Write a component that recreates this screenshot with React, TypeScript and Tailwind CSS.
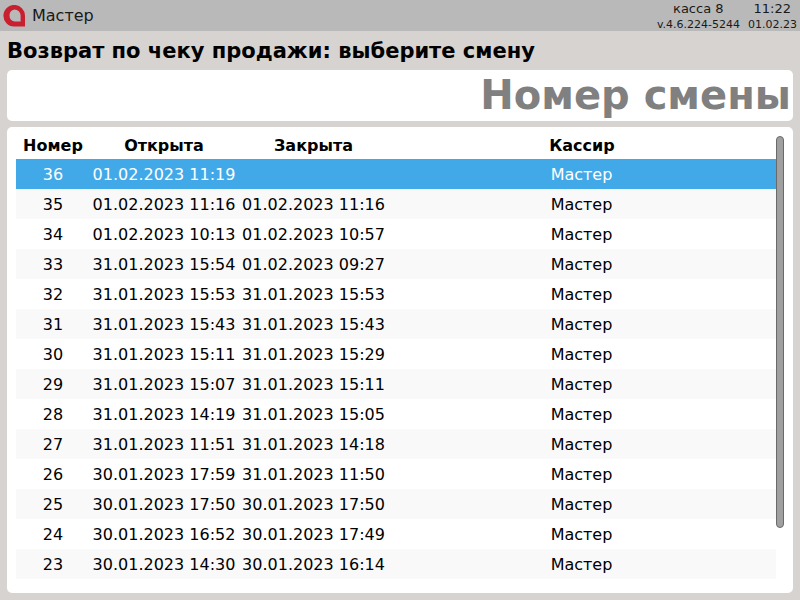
const shifts = [
  ["36", "01.02.2023 11:19", ""],
  ["35", "01.02.2023 11:16", "01.02.2023 11:16"],
  ["34", "01.02.2023 10:13", "01.02.2023 10:57"],
  ["33", "31.01.2023 15:54", "01.02.2023 09:27"],
  ["32", "31.01.2023 15:53", "31.01.2023 15:53"],
  ["31", "31.01.2023 15:43", "31.01.2023 15:43"],
  ["30", "31.01.2023 15:11", "31.01.2023 15:29"],
  ["29", "31.01.2023 15:07", "31.01.2023 15:11"],
  ["28", "31.01.2023 14:19", "31.01.2023 15:05"],
  ["27", "31.01.2023 11:51", "31.01.2023 14:18"],
  ["26", "30.01.2023 17:59", "31.01.2023 11:50"],
  ["25", "30.01.2023 17:50", "30.01.2023 17:50"],
  ["24", "30.01.2023 16:52", "30.01.2023 17:49"],
  ["23", "30.01.2023 14:30", "30.01.2023 16:14"],
];

function Logo() {
  return (
    <svg width="22" height="22" viewBox="0 0 22 22" className="ml-[3px]">
      <path
        d="M22 21.5 H11 A10.8 10.8 0 1 1 22 10.8 Z M11.5 4.5 A6.1 6.1 0 0 0 11.5 16.5 H17.6 V10.6 A6.1 6.1 0 0 0 11.5 4.5 Z"
        fill="#c8202f"
        fillRule="evenodd"
      />
    </svg>
  );
}

export default function App() {
  return (
    <div className="w-[800px] h-[600px] overflow-hidden bg-[#d6d3d0] flex flex-col font-['DejaVu_Sans',sans-serif] text-black">
      {/* Header */}
      <header className="h-[31px] bg-[#b9b9b9] flex items-center justify-between text-[#1a1a1a]">
        <div className="flex items-center">
          <Logo />
          <span className="ml-[7px] text-[16px] leading-none">Мастер</span>
        </div>
        <div className="flex flex-col pr-[3px] pt-[2px] text-right">
          <div className="flex justify-end text-[13px] leading-[16px]">
            <span>касса 8</span>
            <span className="ml-[30px] mr-[6px]">11:22</span>
          </div>
          <div className="flex justify-end text-[11px] leading-[15px]">
            <span>v.4.6.224-5244</span>
            <span className="ml-[8px]">01.02.23</span>
          </div>
        </div>
      </header>

      <h1 className="mt-[7px] ml-[7px] h-[32px] text-[21px] leading-[26px] font-bold">
        Возврат по чеку продажи: выберите смену
      </h1>

      {/* Shift number input */}
      <div className="mx-[7px] h-[51px] rounded-[5px] bg-white flex items-start justify-end pr-[2px]">
        <span className="text-[40px] leading-[50px] font-bold text-[#808080]">Номер смены</span>
      </div>

      {/* Table */}
      <div className="mx-[7px] mt-[6px] h-[466px] rounded-[5px] bg-white flex pl-[9px] pr-[9px]">
        <div className="w-[760px]">
          <div className="h-[32px] grid grid-cols-[74px_148px_151px_1fr] items-end text-[16px] leading-[22px] font-bold text-center pb-[2px]">
            <span>Номер</span>
            <span>Открыта</span>
            <span>Закрыта</span>
            <span className="pr-[1px]">Кассир</span>
          </div>
          {shifts.map((row, i) => (
            <div
              key={row[0]}
              className={
                "h-[30px] pt-[1px] grid grid-cols-[74px_148px_151px_1fr] items-start text-[16px] leading-[29px] text-center " +
                (i === 0 ? "bg-[#42a9e9] text-white" : i % 2 === 1 ? "bg-[#f9f9f9]" : "bg-white")
              }
            >
              <span>{row[0]}</span>
              <span>{row[1]}</span>
              <span>{row[2]}</span>
              <span className="pr-[2px]">Мастер</span>
            </div>
          ))}
        </div>
        <div className="w-[8px] h-[392px] mt-[9px] rounded-[4px] bg-[#a0a0a0] border border-[#6a6a6a]" />
      </div>
    </div>
  );
}
